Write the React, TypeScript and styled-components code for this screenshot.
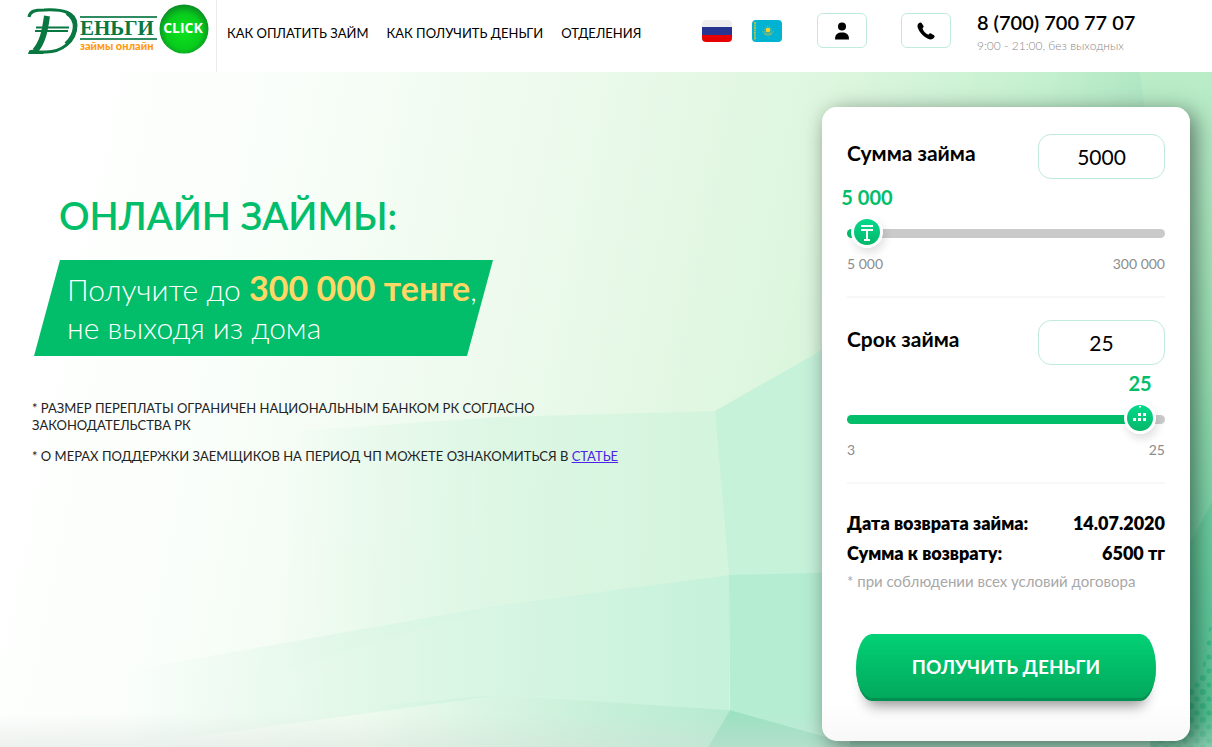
import React, { useState } from 'react';
import styled, { createGlobalStyle } from 'styled-components';

const green = '#02bd69';
const mint = '#bfeadc';

const GlobalStyle = createGlobalStyle`
  *, *::before, *::after { box-sizing: border-box; }
  body {
    margin: 0;
    color: #000;
    background: #fff;
    font-family: Lato, 'Open Sans', sans-serif;
    font-size: 14px;
  }
  h1, p, dl, dd { margin: 0; }
  button, input { font-family: inherit; }
`;

const Page = styled.div`
  display: flex;
  flex-direction: column;
  min-height: 100vh;
`;

const Header = styled.header`
  display: flex;
  align-items: flex-start;
  height: 72px;
  padding-right: 62px;
`;

const LogoLink = styled.a`
  display: block;
  flex: none;
  width: 217px;
  height: 72px;
  padding: 2px 0 0 24px;
  border-right: 1px solid #ececec;
  svg { display: block; }
`;

const Nav = styled.nav`
  display: flex;
  gap: 18px;
  padding: 24px 0 0 10px;
`;

const NavLink = styled.a`
  color: #000;
  font-size: 13px;
  line-height: 18px;
  text-decoration: none;
  white-space: nowrap;
`;

const Languages = styled.div`
  display: flex;
  gap: 20px;
  margin: 20px 35px 0 auto;
`;

const FlagButton = styled.button`
  width: 30px;
  height: 22px;
  padding: 0;
  border: 0;
  border-radius: 4px;
  overflow: hidden;
  background: none;
  cursor: pointer;
  svg { display: block; }
`;

const Actions = styled.div`
  display: flex;
  gap: 34px;
  margin: 13px 26px 0 0;
`;

const IconButton = styled.button`
  display: flex;
  align-items: center;
  justify-content: center;
  width: 50px;
  height: 35px;
  padding: 0;
  border: 1px solid ${mint};
  border-radius: 6px;
  background: #fff;
  cursor: pointer;
`;

const Contact = styled.div`
  min-width: 173px;
  padding-top: 10px;
`;

const Phone = styled.a`
  display: block;
  color: #000;
  font-size: 20px;
  font-weight: 600;
  line-height: 24px;
  text-decoration: none;
  white-space: nowrap;
`;

const Hours = styled.p`
  padding-top: 5px;
  color: #888;
  font-size: 12px;
  font-weight: 300;
  line-height: 14px;
`;

const Hero = styled.main`
  position: relative;
  display: grid;
  grid-template-columns: minmax(0, 1fr) 368px;
  align-items: start;
  flex: 1;
  padding: 35px 22px 6px 32px;
  isolation: isolate;
`;

const Backdrop = styled.svg`
  position: absolute;
  inset: 0;
  z-index: -1;
  width: 100%;
  height: 100%;
`;

const Promo = styled.section`
  padding-top: 81px;
`;

const Title = styled.h1`
  padding-left: 27px;
  color: ${green};
  font-size: 38px;
  font-weight: 600;
  line-height: 54px;
`;

const Banner = styled.p`
  width: 459px;
  margin: 18px 0 44px 2px;
  padding: 10px 0 10px 33px;
  color: #fff;
  background: ${green};
  clip-path: polygon(26px 0, 100% 0, calc(100% - 26px) 100%, 0 100%);
  font-size: 30px;
  font-weight: 300;
  line-height: 38px;
  white-space: nowrap;
`;

const Amount = styled.strong`
  color: #ffd766;
  font-size: 34px;
  font-weight: 700;
  line-height: 30px;
`;

const Note = styled.p`
  max-width: 620px;
  margin-bottom: 14px;
  color: #222;
  font-size: 13px;
  line-height: 17px;
`;

const NoteLink = styled.a`
  color: #4f22e8;
`;

const Card = styled.form`
  padding: 27px 25px 40px;
  border-radius: 15px;
  background: linear-gradient(#fff 94%, #f8f8f8);
  box-shadow: 5px 5px 22px rgba(0, 0, 0, 0.5);
`;

const Field = styled.div`
  height: 164px;
  margin-bottom: 22px;
  border-bottom: 2px solid #f7f7f7;
`;

const FieldHead = styled.div`
  display: flex;
  justify-content: space-between;
  height: 45px;
`;

const FieldLabel = styled.label`
  padding-top: 7px;
  font-size: 21px;
  font-weight: 700;
  line-height: 24px;
`;

const ValueInput = styled.input`
  width: 127px;
  height: 45px;
  border: 1px solid ${mint};
  border-radius: 13px;
  background: #fff;
  font-size: 21px;
  text-align: center;
`;

const SliderBox = styled.div`
  position: relative;
  padding-top: 50px;
`;

const Range = styled.input<{ $stop: string }>`
  display: block;
  width: 100%;
  height: 9px;
  margin: 0;
  border-radius: 5px;
  appearance: none;
  background: linear-gradient(to right, ${green} ${(p) => p.$stop}, #cacaca ${(p) => p.$stop});
  cursor: pointer;
  &::-webkit-slider-thumb {
    appearance: none;
    width: 32px;
    height: 32px;
    background: transparent;
  }
`;

const Pin = styled.div`
  position: absolute;
  top: 5px;
  display: flex;
  flex-direction: column;
  align-items: center;
  gap: 6px;
  width: 60px;
  margin-left: -30px;
  pointer-events: none;
`;

const PinValue = styled.output`
  color: ${green};
  font-size: 20px;
  font-weight: 700;
  line-height: 26px;
  white-space: nowrap;
`;

const Knob = styled.span`
  display: block;
  width: 32px;
  height: 32px;
  border: 3px solid #fff;
  border-radius: 50%;
  background: linear-gradient(#04d98b, #04b76a);
  box-shadow: 2px 5px 8px rgba(0, 0, 0, 0.12);
  svg { display: block; }
`;

const Limits = styled.div`
  display: flex;
  justify-content: space-between;
  padding-top: 17px;
  color: #8c8c8c;
  font-size: 14px;
  line-height: 18px;
`;

const Summary = styled.dl`
  padding-top: 2px;
`;

const SummaryRow = styled.div`
  display: flex;
  justify-content: space-between;
  font-size: 18px;
  font-weight: 800;
  line-height: 30px;
`;

const Terms = styled.p`
  padding-top: 3px;
  color: #a8a8a8;
  font-size: 15px;
  line-height: 20px;
`;

const Submit = styled.button`
  display: block;
  width: 300px;
  max-width: 100%;
  height: 67px;
  margin: 43px auto 0;
  padding: 0;
  border: 0;
  border-bottom: 3px solid #029052;
  border-radius: 16px / 34px;
  color: #fff;
  background: linear-gradient(#02d175, #02a95c);
  box-shadow: 0 14px 14px -10px rgba(0, 0, 0, 0.45);
  font-size: 19px;
  font-weight: 700;
  cursor: pointer;
`;

const Logo = () => (
  <svg width="188" height="56" viewBox="24 2 188 56" role="img" aria-label="Деньги Click, займы онлайн">
    <defs>
      <radialGradient id="ball" cx="0.5" cy="0.55" r="0.55">
        <stop offset="0" stopColor="#0ce41c" />
        <stop offset="0.65" stopColor="#08cc1c" />
        <stop offset="1" stopColor="#0b8a24" />
      </radialGradient>
    </defs>
    <g fill="none" stroke="#087740">
      <path d="M29 17C30 11 35 10 44 10C62 9 76 12 76 25C76 42 61 52 46 52H29" strokeWidth="3" />
      <path d="M67 13C78 20 77 34 66 44" strokeWidth="4" />
      <path d="M47 16C45 30 43 42 35 51" strokeWidth="6" />
      <path d="M36 27.500H69M35 31H68" strokeWidth="2" />
    </g>
    <path d="M28 54C29 49 33 49 37 51L46 51L43 54Z" fill="#087740" />
    <path d="M80 16H157V18H80ZM80 38H157V40H80Z" fill="#2f8b60" />
    <text x="80" y="35" fill="#087740" fontFamily="Liberation Serif, serif" fontSize="21" fontWeight="700">ЕНЬГИ</text>
    <text x="80" y="50" fill="#ff9a10" fontFamily="Lato, sans-serif" fontSize="11" fontWeight="900">займы онлайн</text>
    <circle cx="184" cy="29" r="24.500" fill="url(#ball)" />
    <text x="183" y="33" fill="#fff" textAnchor="middle" fontFamily="Open Sans, sans-serif" fontSize="14" fontWeight="700">CLICK</text>
  </svg>
);

const RussianFlag = () => (
  <svg width="30" height="22">
    <path d="M0 0H30V8H0Z" fill="#eee" />
    <path d="M0 7H30V15H0Z" fill="#273590" />
    <path d="M0 15H30V22H0Z" fill="#e60000" />
  </svg>
);

const KazakhFlag = () => (
  <svg width="30" height="22">
    <rect width="30" height="22" fill="#00b3d2" />
    <path d="M3 2V20" stroke="#a8bd4c" strokeWidth="2" strokeDasharray="2 0.500" />
    <circle cx="16" cy="10" r="2.300" fill="#ffcf28" />
    <circle cx="16" cy="10" r="3.300" fill="none" stroke="#d0bd45" strokeWidth="0.800" strokeDasharray="1 1" />
    <path d="M10.500 11C12 15 20 15 21.500 11M12 14Q16 17 20 14" fill="none" stroke="#85b978" strokeWidth="1" />
  </svg>
);

const PersonIcon = () => (
  <svg width="16" height="18" aria-hidden="true">
    <circle cx="8" cy="4.500" r="4" />
    <path d="M1 17.500C1 12 4 10.500 8 10.500S15 12 15 17.500Z" />
  </svg>
);

const PhoneIcon = () => (
  <svg width="18" height="18" aria-hidden="true">
    <path d="M1.500 1.500C3 0 4 .3 4.800 1.200L6.500 4C7 5 6.200 5.500 5.500 6.300C6 9 9 12 11.500 12.700C12.300 11.700 13 11 14 11.500L17 13.200C18 14 17.800 15 16.800 16C15 17.800 13 17.700 10.500 16.500C6 14.500 2 9.500.7 5.500C.3 4 .5 2.500 1.500 1.500Z" />
  </svg>
);

const TengeIcon = () => (
  <svg width="26" height="26" fill="none" stroke="#fff" strokeWidth="2" aria-hidden="true">
    <path d="M7 7H19M7 11H19M13 11V21M10 21H16" />
  </svg>
);

const CalendarIcon = () => (
  <svg width="26" height="26" fill="#fff" aria-hidden="true">
    <path d="M12 1H14V2L13 3L12 2ZM11 8H14V11H11ZM16 8H19V11H16ZM6 13H9V16H6ZM11 13H14V16H11ZM16 13H19V16H16Z" />
  </svg>
);

const HeroBackdrop = () => (
  <Backdrop viewBox="0 0 1212 675" preserveAspectRatio="none" aria-hidden="true">
    <defs>
      <linearGradient id="base" gradientUnits="userSpaceOnUse" x1="0" y1="0" x2="1180" y2="240">
        <stop offset="0.040" stopColor="#ffffff" />
        <stop offset="0.220" stopColor="#fafefa" />
        <stop offset="0.450" stopColor="#edfaed" />
        <stop offset="0.680" stopColor="#ddf6de" />
        <stop offset="0.850" stopColor="#c4f0cf" />
        <stop offset="1" stopColor="#a0dfba" />
      </linearGradient>
      <linearGradient id="middle" gradientUnits="userSpaceOnUse" x1="280" y1="0" x2="730" y2="0">
        <stop offset="0" stopColor="#d9f6e4" stopOpacity="0" />
        <stop offset="0.500" stopColor="#d9f6e2" stopOpacity="0.800" />
        <stop offset="1" stopColor="#d3f4dd" />
      </linearGradient>
      <linearGradient id="lower" gradientUnits="userSpaceOnUse" x1="120" y1="0" x2="730" y2="0">
        <stop offset="0" stopColor="#dcf6e6" stopOpacity="0" />
        <stop offset="0.600" stopColor="#d6f5e3" stopOpacity="0.900" />
        <stop offset="1" stopColor="#c5f1da" />
      </linearGradient>
      <linearGradient id="floor" gradientUnits="userSpaceOnUse" x1="360" y1="0" x2="730" y2="0">
        <stop offset="0" stopColor="#bdecd6" stopOpacity="0" />
        <stop offset="1" stopColor="#b6ebd1" />
      </linearGradient>
      <linearGradient id="edge" x1="0" y1="0" x2="0" y2="1">
        <stop offset="0" stopColor="#baecc8" />
        <stop offset="0.450" stopColor="#92daae" />
        <stop offset="0.700" stopColor="#74cfa4" />
        <stop offset="1" stopColor="#52c293" />
      </linearGradient>
      <linearGradient id="fade" x1="0" y1="0" x2="0" y2="1">
        <stop offset="0.950" stopColor="#d5ded9" stopOpacity="0" />
        <stop offset="1" stopColor="#d5ded9" stopOpacity="0.400" />
      </linearGradient>
      <pattern id="dots" width="12" height="14" patternUnits="userSpaceOnUse">
        <circle cx="3" cy="4" r="3" fill="#20ae78" />
        <circle cx="9" cy="11" r="2.500" fill="#20ae78" />
      </pattern>
    </defs>
    <rect width="1212" height="675" fill="url(#base)" />
    <path d="M280 360L500 345L715 339L729 503L500 533L280 600Z" fill="url(#middle)" />
    <path d="M120 600L500 533L729 503V638L500 623L120 675Z" fill="url(#lower)" />
    <path d="M300 640L500 623L730 638L708 675H300Z" fill="url(#floor)" />
    <path d="M715 339L850 262V503H729Z" fill="#c6f2da" />
    <path d="M729 503L850 500V675L730 638Z" fill="#b5edd3" />
    <path d="M730 638L850 672V675H708Z" fill="#9ce1c2" />
    <path d="M850 668H1212V675H850Z" fill="#86d8b5" />
    <path d="M940 0H1140L1212 100V0Z" fill="#c4f1ce" opacity="0.700" />
    <path d="M1140 0H1212V675H1150V80Z" fill="url(#edge)" />
    <path d="M1185 480L1212 430V675H1150Z" fill="#46bd8c" opacity="0.300" />
    <path d="M1150 675L1202 600L1212 540V675Z" fill="url(#dots)" opacity="0.500" />
    <rect width="1212" height="675" fill="url(#fade)" />
  </Backdrop>
);

type LoanFieldProps = {
  id: string;
  label: string;
  min: number;
  max: number;
  step: number;
  value: number;
  onChange: (value: number) => void;
  icon: React.ReactNode;
};

const spaced = (value: number) => String(value).replace(/\B(?=(\d{3})+$)/g, ' ');

const LoanField = ({ id, label, min, max, step, value, onChange, icon }: LoanFieldProps) => {
  const ratio = Math.min(1, Math.max(0, (value - min) / (max - min)));
  const position = `calc(20px + (100% - 45px) * ${ratio})`;
  const update = (e: React.ChangeEvent<HTMLInputElement>) => onChange(Number(e.target.value) || 0);
  return (
    <Field>
      <FieldHead>
        <FieldLabel htmlFor={id}>{label}</FieldLabel>
        <ValueInput id={id} inputMode="numeric" value={value} onChange={update} />
      </FieldHead>
      <SliderBox>
        <Range type="range" aria-label={label} min={min} max={max} step={step} value={value} onChange={update} $stop={position} />
        <Pin style={{ left: position }}>
          <PinValue htmlFor={id}>{spaced(value)}</PinValue>
          <Knob>{icon}</Knob>
        </Pin>
      </SliderBox>
      <Limits>
        <span>{spaced(min)}</span>
        <span>{spaced(max)}</span>
      </Limits>
    </Field>
  );
};

export default function App() {
  const [sum, setSum] = useState(5000);
  const [days, setDays] = useState(25);

  return (
    <Page>
      <GlobalStyle />
      <Header>
        <LogoLink href="#"><Logo /></LogoLink>
        <Nav>
          <NavLink href="#pay">КАК ОПЛАТИТЬ ЗАЙМ</NavLink>
          <NavLink href="#get">КАК ПОЛУЧИТЬ ДЕНЬГИ</NavLink>
          <NavLink href="#offices">ОТДЕЛЕНИЯ</NavLink>
        </Nav>
        <Languages>
          <FlagButton type="button" aria-label="Русский"><RussianFlag /></FlagButton>
          <FlagButton type="button" aria-label="Қазақша"><KazakhFlag /></FlagButton>
        </Languages>
        <Actions>
          <IconButton type="button" aria-label="Личный кабинет"><PersonIcon /></IconButton>
          <IconButton type="button" aria-label="Позвонить"><PhoneIcon /></IconButton>
        </Actions>
        <Contact>
          <Phone href="tel:87007007707">8 (700) 700 77 07</Phone>
          <Hours>9:00 - 21:00, без выходных</Hours>
        </Contact>
      </Header>
      <Hero>
        <HeroBackdrop />
        <Promo>
          <Title>ОНЛАЙН ЗАЙМЫ:</Title>
          <Banner>
            Получите до <Amount>300 000 тенге</Amount>,<br />
            не выходя из дома
          </Banner>
          <Note>* РАЗМЕР ПЕРЕПЛАТЫ ОГРАНИЧЕН НАЦИОНАЛЬНЫМ БАНКОМ РК СОГЛАСНО ЗАКОНОДАТЕЛЬСТВА РК</Note>
          <Note>
            * О МЕРАХ ПОДДЕРЖКИ ЗАЕМЩИКОВ НА ПЕРИОД ЧП МОЖЕТЕ ОЗНАКОМИТЬСЯ В <NoteLink href="#article">СТАТЬЕ</NoteLink>
          </Note>
        </Promo>
        <Card onSubmit={(e) => e.preventDefault()}>
          <LoanField id="sum" label="Сумма займа" min={5000} max={300000} step={1000} value={sum} onChange={setSum} icon={<TengeIcon />} />
          <LoanField id="days" label="Срок займа" min={3} max={25} step={1} value={days} onChange={setDays} icon={<CalendarIcon />} />
          <Summary>
            <SummaryRow><dt>Дата возврата займа:</dt><dd>14.07.2020</dd></SummaryRow>
            <SummaryRow><dt>Сумма к возврату:</dt><dd>6500 тг</dd></SummaryRow>
          </Summary>
          <Terms>* при соблюдении всех условий договора</Terms>
          <Submit type="submit">ПОЛУЧИТЬ ДЕНЬГИ</Submit>
        </Card>
      </Hero>
    </Page>
  );
}
